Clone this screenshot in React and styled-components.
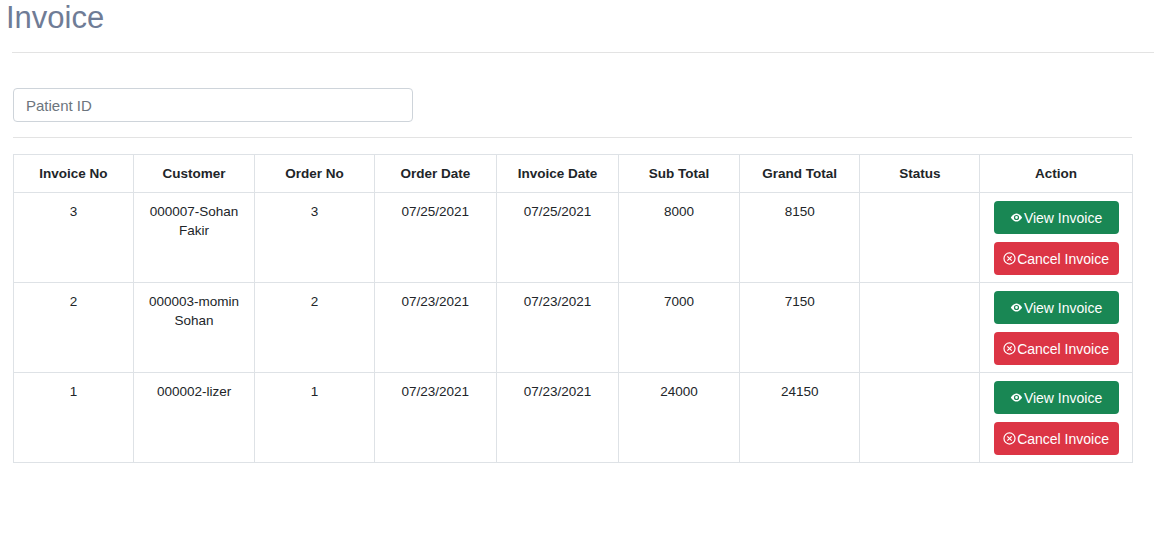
import React from "react";
import styled, { createGlobalStyle } from "styled-components";

const Global = createGlobalStyle`
  body { margin: 0; background: #fff; font-family: "Liberation Sans", Arial, sans-serif; color: #212529; }
`;
const Page = styled.div` padding: 0 22px 0 13px; `;
const Title = styled.h1`
  margin: 0 0 0 -7px; font-weight: 400; font-size: 31px; line-height: 36px; color: #6f7c96;
`;
const Rule = styled.hr`
  border: 0; border-top: 1px solid #e3e3e3; margin: ${p => p.$m}; ${p => p.$full ? "margin-right:-22px;margin-left:-1px;" : ""}
`;
const Input = styled.input`
  box-sizing: border-box; width: 400px; height: 34px; padding: 0 12px;
  border: 1px solid #ced4da; border-radius: 4px; font: 15px "Liberation Sans", Arial, sans-serif; color: #495057;
  &::placeholder { color: #6c757d; }
`;
const Table = styled.table`
  width: 1120px; border-collapse: collapse; font-size: 13.5px;
  th, td { border: 1px solid #dee2e6; text-align: center; vertical-align: top; }
  th { height: 35px; vertical-align: middle; font-weight: 700; }
  td { height: 90px; padding: 9px 12px 0; box-sizing: border-box; line-height: 19px; }
`;
const Actions = styled.div` display: flex; flex-direction: column; align-items: center; gap: 8px; `;
const Btn = styled.button`
  width: 125px; height: 33px; border: 0; border-radius: 4px; color: #fff; font: 14px "Liberation Sans", Arial, sans-serif;
  background: ${p => p.$bg}; display: flex; align-items: center; justify-content: center; gap: 1px; padding: 0;
`;

const Eye = () => (
  <svg width="13" height="13" viewBox="0 0 16 16" fill="#fff"><path d="M8 3C4 3 1 8 1 8s3 5 7 5 7-5 7-5-3-5-7-5zm0 8.2A3.2 3.2 0 1 1 8 4.8a3.2 3.2 0 0 1 0 6.4zM8 6.3A1.7 1.7 0 1 0 8 9.7 1.7 1.7 0 0 0 8 6.3z"/></svg>
);
const XCircle = () => (
  <svg width="13" height="13" viewBox="0 0 16 16" fill="none" stroke="#fff" strokeWidth="1.5"><circle cx="8" cy="8" r="6.8"/><path d="M5.3 5.3l5.4 5.4M10.7 5.3l-5.4 5.4"/></svg>
);

const rows = [
  ["3", <>000007-Sohan<br />Fakir</>, "3", "07/25/2021", "07/25/2021", "8000", "8150"],
  ["2", <>000003-momin<br />Sohan</>, "2", "07/23/2021", "07/23/2021", "7000", "7150"],
  ["1", "000002-lizer", "1", "07/23/2021", "07/23/2021", "24000", "24150"],
];
const heads = ["Invoice No", "Customer", "Order No", "Order Date", "Invoice Date", "Sub Total", "Grand Total", "Status", "Action"];

export default function App() {
  return (
    <Page>
      <Global />
      <Title>Invoice</Title>
      <Rule $full $m="16px 0 35px" />
      <Input placeholder="Patient ID" />
      <Rule $m="15px 0 16px" />
      <Table>
        <thead><tr>{heads.map((h, i) => <th key={h} style={{ width: i === 8 ? 150 : 121 }}>{h}</th>)}</tr></thead>
        <tbody>
          {rows.map((r, i) => (
            <tr key={i}>
              {r.map((c, j) => <td key={j}>{c}</td>)}
              <td></td>
              <td style={{ paddingTop: 8 }}>
                <Actions>
                  <Btn $bg="#198754"><Eye />View Invoice</Btn>
                  <Btn $bg="#dc3545"><XCircle />Cancel Invoice</Btn>
                </Actions>
              </td>
            </tr>
          ))}
        </tbody>
      </Table>
    </Page>
  );
}
